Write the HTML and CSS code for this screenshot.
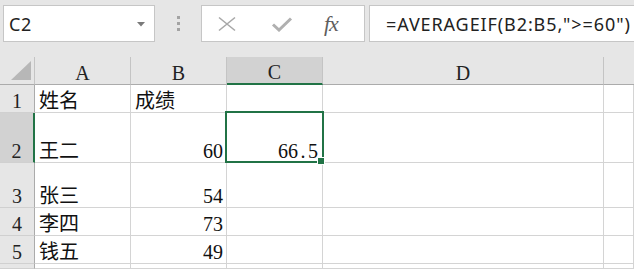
FILE: index.html
```html
<!DOCTYPE html>
<html lang="zh-CN">
<head>
<meta charset="UTF-8">
<title>AVERAGEIF</title>
<link rel="stylesheet" href="styles.css">
</head>
<body>
    <div class="toolbar">
        <div class="namebox">
            <span class="ref">C2</span>
            <svg class="arrow" width="8" height="5" viewBox="0 0 8 5"><path d="M0 0H8L4 4.5Z" fill="#7a7a7a"/></svg>
        </div>
        <div class="grip"><i></i><i></i><i></i></div>
        <div class="fxbox">
            <svg class="btn" width="20" height="16" viewBox="0 0 20 16"><path d="M2 1.5L18 14.5M18 1.5L2 14.5" stroke="#a8a8a8" stroke-width="1.6" fill="none"/></svg>
            <svg class="btn" width="22" height="16" viewBox="0 0 22 16"><path d="M2 8.5L8 14L20 2.5" stroke="#b0b0b0" stroke-width="3" fill="none"/></svg>
            <span class="fx">fx</span>
        </div>
        <div class="formula">=AVERAGEIF(B2:B5,"&gt;=60")</div>
    </div>

    <div class="sheet">
        <div class="hd corner"><svg width="20" height="19" viewBox="0 0 20 19"><path d="M0 19H20V0Z" fill="#b7b7b7"/></svg></div>
        <div class="hd col">A</div>
        <div class="hd col">B</div>
        <div class="hd col sel-col">C</div>
        <div class="hd col">D</div>
        <div class="hd col last"></div>

        <div class="hd row">1</div>
        <div class="cell">姓名</div>
        <div class="cell">成绩</div>
        <div class="cell"></div>
        <div class="cell"></div>
        <div class="cell"></div>

        <div class="hd row sel-row">2</div>
        <div class="cell">王二</div>
        <div class="cell num">60</div>
        <div class="cell num active">66<span class="pt">.</span>5<span class="handle"></span></div>
        <div class="cell"></div>
        <div class="cell"></div>

        <div class="hd row">3</div>
        <div class="cell">张三</div>
        <div class="cell num">54</div>
        <div class="cell"></div>
        <div class="cell"></div>
        <div class="cell"></div>

        <div class="hd row">4</div>
        <div class="cell">李四</div>
        <div class="cell num">73</div>
        <div class="cell"></div>
        <div class="cell"></div>
        <div class="cell"></div>

        <div class="hd row">5</div>
        <div class="cell">钱五</div>
        <div class="cell num">49</div>
        <div class="cell"></div>
        <div class="cell"></div>
        <div class="cell"></div>

        <div class="hd row"></div>
        <div class="cell"></div>
        <div class="cell"></div>
        <div class="cell"></div>
        <div class="cell"></div>
        <div class="cell"></div>
    </div>
</body>
</html>
```

FILE: styles.css
```css
body {
    margin: 0;
    padding: 0;
    background-color: #e6e6e6;
    overflow: hidden;
    height: 269px;
}
.toolbar {
    display: flex;
    align-items: flex-start;
    height: 57px;
    padding-top: 5px;
    box-sizing: border-box;
    font-family: "Noto Sans", sans-serif;
}
.namebox {
    margin-left: 3px;
    width: 152px;
    height: 37px;
    box-sizing: border-box;
    background-color: #fff;
    border: 1px solid #c6c6c6;
    display: flex;
    align-items: center;
    justify-content: space-between;
    padding: 0 9px 0 5px;
}
.ref {
    font-size: 18px;
    color: #222;
    letter-spacing: 0.5px;
}
.arrow {
    margin-top: 2px;
}
.grip {
    width: 46px;
    height: 37px;
    display: flex;
    flex-direction: column;
    align-items: center;
    justify-content: center;
    gap: 3px;
}
.grip i {
    display: block;
    width: 3px;
    height: 3px;
    background-color: #a3a3a3;
}
.fxbox {
    width: 164px;
    height: 37px;
    box-sizing: border-box;
    background-color: #fff;
    border: 1px solid #c6c6c6;
    display: flex;
    align-items: center;
    padding-left: 15px;
    gap: 34px;
}
.fxbox .btn {
    display: block;
}
.fx {
    font-family: "Liberation Serif", serif;
    font-style: italic;
    font-size: 22px;
    color: #5e5e5e;
    margin-left: -3px;
    letter-spacing: -1px;
}
.formula {
    flex: 1;
    margin-left: 4px;
    margin-right: -2px;
    height: 37px;
    box-sizing: border-box;
    background-color: #fff;
    border: 1px solid #c6c6c6;
    display: flex;
    align-items: center;
    padding-left: 16px;
    font-size: 18px;
    letter-spacing: 0.9px;
    color: #222;
    white-space: nowrap;
}
.sheet {
    display: grid;
    grid-template-columns: 35px 96px 96px 96px 281px 1fr;
    grid-template-rows: 28px 28px 50px 45px 28px 28px 1fr;
    height: 212px;
    background-color: #fff;
    font-family: "Liberation Serif", "Noto Sans CJK SC", serif;
    font-size: 20px;
    line-height: 22px;
    color: #111;
}
.sheet > div {
    box-sizing: border-box;
    display: flex;
    align-items: flex-end;
    white-space: nowrap;
}
.hd {
    background-color: #e6e6e6;
    color: #222;
    justify-content: center;
}
.col {
    border-right: 1px solid #c4c4c4;
    border-bottom: 1px solid #ababab;
}
.col.last {
    border-right: none;
}
.corner {
    border-right: 1px solid #c4c4c4;
    border-bottom: 1px solid #ababab;
    justify-content: flex-end;
    padding: 0 3px 4px 0;
}
.corner svg {
    display: block;
}
.row {
    border-right: 1px solid #ababab;
    border-bottom: 1px solid #d0d0d0;
}
.sel-col {
    background-color: #d2d2d2;
    border-bottom: 2px solid #217346;
}
.sel-row {
    background-color: #d2d2d2;
    border-right: 2px solid #217346;
}
.cell {
    border-right: 1px solid #d4d4d4;
    border-bottom: 1px solid #d4d4d4;
    padding: 0 4px 0 4px;
}
.num {
    justify-content: flex-end;
    padding-right: 3px;
}
.pt {
    display: inline-block;
    width: 10px;
    text-align: center;
}
.active {
    position: relative;
    padding-right: 4px;
}
.active::after {
    content: "";
    position: absolute;
    left: -2px;
    top: -2px;
    width: 99px;
    height: 52px;
    box-sizing: border-box;
    border: 2px solid #217346;
}
.handle {
    position: absolute;
    right: -3px;
    bottom: -3px;
    width: 6px;
    height: 6px;
    background-color: #217346;
    border: 1px solid #fff;
    z-index: 1;
}
```
